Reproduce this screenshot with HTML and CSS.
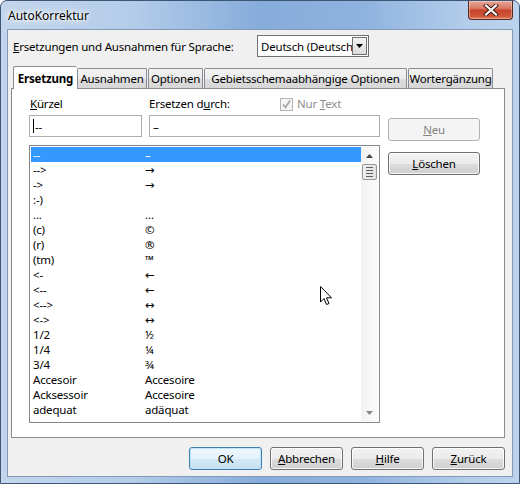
FILE: index.html
```html
<!DOCTYPE html>
<html lang="de">
<head>
<meta charset="utf-8">
<title>AutoKorrektur</title>
<link rel="stylesheet" href="styles.css">
</head>
<body>
<div class="window">
  <div class="titlebar">
    <span class="title">AutoKorrektur</span>
    <div class="close">
      <svg width="16" height="12" viewBox="0 0 16 12"><path d="M3 1.5 L13 10.5 M13 1.5 L3 10.5" stroke="#3a1610" stroke-width="4" stroke-linecap="square"/><path d="M3 1.5 L13 10.5 M13 1.5 L3 10.5" stroke="#ffffff" stroke-width="2.2" stroke-linecap="square"/></svg>
    </div>
  </div>
  <div class="client">
    <div class="langrow">
      <span class="langlabel"><u>E</u>rsetzungen und Ausnahmen für Sprache:</span>
      <div class="combo">
        <span class="combotext">Deutsch (Deutsch</span>
        <div class="dropbtn"><svg width="7" height="4" viewBox="0 0 7 4"><path d="M0 0 H7 L3.5 4 Z" fill="#000"/></svg></div>
      </div>
    </div>
    <div class="tabs">
      <div class="tab sel">Ersetzung</div>
      <div class="tab t2">Ausnahmen</div>
      <div class="tab t3">Optionen</div>
      <div class="tab t4">Gebietsschemaabhängige Optionen</div>
      <div class="tab t5">Wortergänzung</div>
    </div>
    <div class="panel">
      <div class="leftcol">
        <div class="labels">
          <span class="lbl1"><u>K</u>ürzel</span>
          <span class="lbl2">Ersetzen d<u>u</u>rch:</span>
          <span class="check">
            <span class="box"><svg width="11" height="11" viewBox="0 0 11 11"><path d="M2 5.5 L4.5 8.5 L9 1.5" fill="none" stroke="#a2a2a2" stroke-width="1.6"/></svg></span>
            <span class="checktext">Nur <u>T</u>ext</span>
          </span>
        </div>
        <div class="inputs">
          <div class="input in1"><span class="caret"></span>--</div>
          <div class="input in2">–</div>
        </div>
        <div class="list">
          <div class="rows">
            <div class="row selrow"><span class="c1">--</span><span>–</span></div>
            <div class="row"><span class="c1">--&gt;</span><span>→</span></div>
            <div class="row"><span class="c1">-&gt;</span><span>→</span></div>
            <div class="row"><span class="c1">:-)</span><span></span></div>
            <div class="row"><span class="c1">...</span><span>…</span></div>
            <div class="row"><span class="c1">(c)</span><span>©</span></div>
            <div class="row"><span class="c1">(r)</span><span>®</span></div>
            <div class="row"><span class="c1">(tm)</span><span>™</span></div>
            <div class="row"><span class="c1">&lt;-</span><span>←</span></div>
            <div class="row"><span class="c1">&lt;--</span><span>←</span></div>
            <div class="row"><span class="c1">&lt;--&gt;</span><span>↔</span></div>
            <div class="row"><span class="c1">&lt;-&gt;</span><span>↔</span></div>
            <div class="row"><span class="c1">1/2</span><span>½</span></div>
            <div class="row"><span class="c1">1/4</span><span>¼</span></div>
            <div class="row"><span class="c1">3/4</span><span>¾</span></div>
            <div class="row"><span class="c1">Accesoir</span><span>Accesoire</span></div>
            <div class="row"><span class="c1">Acksessoir</span><span>Accesoire</span></div>
            <div class="row"><span class="c1">adequat</span><span>adäquat</span></div>
            <div class="row"><span class="c1">adnere</span><span>andere</span></div>
          </div>
          <div class="scrollbar">
            <div class="arrow"><svg width="7" height="4" viewBox="0 0 7 4"><path d="M0 4 H7 L3.5 0 Z" fill="#444"/></svg></div>
            <div class="thumb"><span></span><span></span><span></span><span></span></div>
            <div class="track"></div>
            <div class="arrow"><svg width="7" height="4" viewBox="0 0 7 4"><path d="M0 0 H7 L3.5 4 Z" fill="#888"/></svg></div>
          </div>
        </div>
      </div>
      <div class="rightcol">
        <div class="btn disabled neu"><u>N</u>eu</div>
        <div class="btn loeschen"><u>L</u>öschen</div>
      </div>
    </div>
    <div class="footer">
      <div class="btn default">OK</div>
      <div class="btn"><u>A</u>bbrechen</div>
      <div class="btn"><u>H</u>ilfe</div>
      <div class="btn"><u>Z</u>urück</div>
    </div>
  </div>
  <svg class="cursor" width="13" height="20" viewBox="0 0 13 20"><path d="M0.5 0.5 V16 L4 12.5 L6.5 18.5 L9 17.5 L6.5 11.8 H11.5 Z" fill="#fff" stroke="#000" stroke-width="1"/></svg>
</div>
</body>
</html>
```

FILE: styles.css
```css
* { box-sizing: border-box; }
body {
  margin: 0;
  font-family: "Noto Sans", "DejaVu Sans", sans-serif;
  font-size: 11.5px;
  letter-spacing: -0.2px;
  color: #000;
}
u { text-decoration: underline; text-underline-offset: 1px; }

.window {
  position: relative;
  width: 520px;
  height: 484px;
  border: 1px solid #3e5676;
  border-radius: 7px 7px 0 0;
  background: linear-gradient(90deg, #c2d5ec 0%, #b4cde9 25%, #86acdb 50%, #8fb3df 70%, #b3cdea 90%, #bcd3ec 100%);
  display: flex;
  flex-direction: column;
  overflow: hidden;
}
.titlebar {
  height: 28px;
  display: flex;
  justify-content: space-between;
  align-items: flex-start;
}
.title {
  padding: 6px 0 0 7px;
  font-size: 12px;
  letter-spacing: 0;
  color: #000;
  text-shadow: 0 0 6px #fff, 0 0 10px #fff, 0 0 3px #fff;
}
.close {
  width: 45px;
  height: 19px;
  margin-right: 6px;
  border: 1px solid #5b2920;
  border-top: none;
  border-radius: 0 0 4px 4px;
  background: linear-gradient(#e7a496 0%, #d97b66 40%, #c7432b 52%, #cf573c 85%, #e07a5c 100%);
  box-shadow: inset 0 0 0 1px rgba(255,255,255,0.35);
  display: flex;
  align-items: center;
  justify-content: center;
}

.client {
  margin-left: 6px;
  width: 506px;
  height: 448px;
  border: 1px solid #8399b6;
  background: #f0f0f0;
  padding: 5px 7px 0 3px;
  display: flex;
  flex-direction: column;
}

.langrow {
  height: 22px;
  display: flex;
  align-items: center;
  padding-left: 2px;
}
.langlabel { width: 244px; }
.combo {
  width: 112px;
  height: 22px;
  border: 1px solid #707070;
  background: #fff;
  display: flex;
  align-items: center;
  position: relative;
  overflow: hidden;
}
.combotext {
  padding-left: 3px;
  white-space: nowrap;
  overflow: hidden;
  width: 96px;
}
.dropbtn {
  position: absolute;
  right: 1px;
  top: 1px;
  width: 15px;
  height: 18px;
  border: 1px solid #707070;
  background: linear-gradient(#f2f2f2, #dcdcdc);
  display: flex;
  align-items: center;
  justify-content: center;
}

.tabs {
  margin-top: 9px;
  height: 22px;
  display: flex;
  align-items: flex-end;
  padding-left: 2px;
  position: relative;
  z-index: 1;
}
.tab {
  height: 20px;
  border: 1px solid #898c95;
  border-bottom: none;
  background: linear-gradient(#f3f3f3 0%, #ebebeb 50%, #dedede 51%, #d6d6d6 100%);
  display: flex;
  align-items: center;
  justify-content: center;
  white-space: nowrap;
  border-radius: 2px 2px 0 0;
}
.tab.sel {
  width: 64px;
  height: 23px;
  margin-bottom: -1px;
  background: #fff;
  font-weight: bold;
  border-right: none;
}
.t2 { width: 70px; }
.t3 { width: 55px; margin-left: 1px; }
.t4 { width: 203px; margin-left: 1px; }
.t5 { width: 85px; margin-left: 1px; }

.panel {
  height: 350px;
  border: 1px solid #898c95;
  background: #fff;
  padding: 8px 0 0 17px;
  display: grid;
  grid-template-columns: 351px 92px;
  column-gap: 8px;
  align-items: start;
}
.labels {
  height: 14px;
  display: flex;
  align-items: center;
  line-height: 14px;
}
.lbl1 { width: 120px; padding-left: 1px; }
.lbl2 { width: 131px; }
.check {
  display: flex;
  align-items: center;
  color: #8d8d8d;
}
.box {
  width: 13px;
  height: 13px;
  border: 1px solid #b4b4b4;
  background: #f4f4f4;
  display: flex;
  align-items: center;
  justify-content: center;
  margin-right: 4px;
}
.inputs {
  margin-top: 4px;
  display: flex;
  gap: 7px;
}
.input {
  height: 22px;
  border: 1px solid #abadb3;
  background: #fff;
  display: flex;
  align-items: center;
  padding-left: 3px;
}
.in1 { width: 113px; }
.in2 { width: 231px; }
.caret {
  width: 1px;
  height: 14px;
  background: #000;
  margin-right: 1px;
}
.list {
  margin-top: 8px;
  height: 278px;
  border: 1px solid #828790;
  padding: 1px;
  display: flex;
  overflow: hidden;
}
.rows {
  flex: 1;
  overflow: hidden;
}
.row {
  height: 15px;
  line-height: 15px;
  display: flex;
  padding-left: 2px;
  white-space: nowrap;
}
.c1 { width: 112px; }
.selrow {
  background: #3399ff;
  color: #fff;
}
.scrollbar {
  width: 17px;
  display: flex;
  flex-direction: column;
  background: linear-gradient(90deg, #f3f3f3, #fbfbfb);
}
.arrow {
  height: 17px;
  display: flex;
  align-items: center;
  justify-content: center;
}
.thumb {
  height: 16px;
  margin: 0 1px;
  border: 1px solid #979797;
  border-radius: 2px;
  background: linear-gradient(90deg, #f0f0f0, #e2e2e2);
  display: flex;
  flex-direction: column;
  justify-content: center;
  align-items: center;
  gap: 2px;
}
.thumb span {
  width: 7px;
  height: 1px;
  background: #606060;
}
.track { flex: 1; }

.rightcol {
  display: flex;
  flex-direction: column;
  padding-top: 21px;
  gap: 11px;
}
.btn {
  height: 23px;
  border: 1px solid #707070;
  border-radius: 3px;
  background: linear-gradient(#f2f2f2 0%, #ebebeb 50%, #dddddd 51%, #cfcfcf 100%);
  box-shadow: inset 0 0 0 1px rgba(255,255,255,0.8);
  display: flex;
  align-items: center;
  justify-content: center;
  white-space: nowrap;
}
.btn.disabled {
  border-color: #adb2b5;
  background: #f4f4f4;
  color: #838383;
  box-shadow: none;
}
.footer {
  margin-top: 9px;
  display: flex;
  justify-content: flex-end;
  gap: 8px;
}
.footer .btn { width: 73px; }
.btn.default {
  border-color: #3c7fb1;
  box-shadow: inset 0 0 0 1px #bfe5fa;
  background: linear-gradient(#eef7fd 0%, #e3f2fb 50%, #d3e8f5 51%, #c7e0ef 100%);
}

.cursor {
  position: absolute;
  left: 319px;
  top: 285px;
}
```
